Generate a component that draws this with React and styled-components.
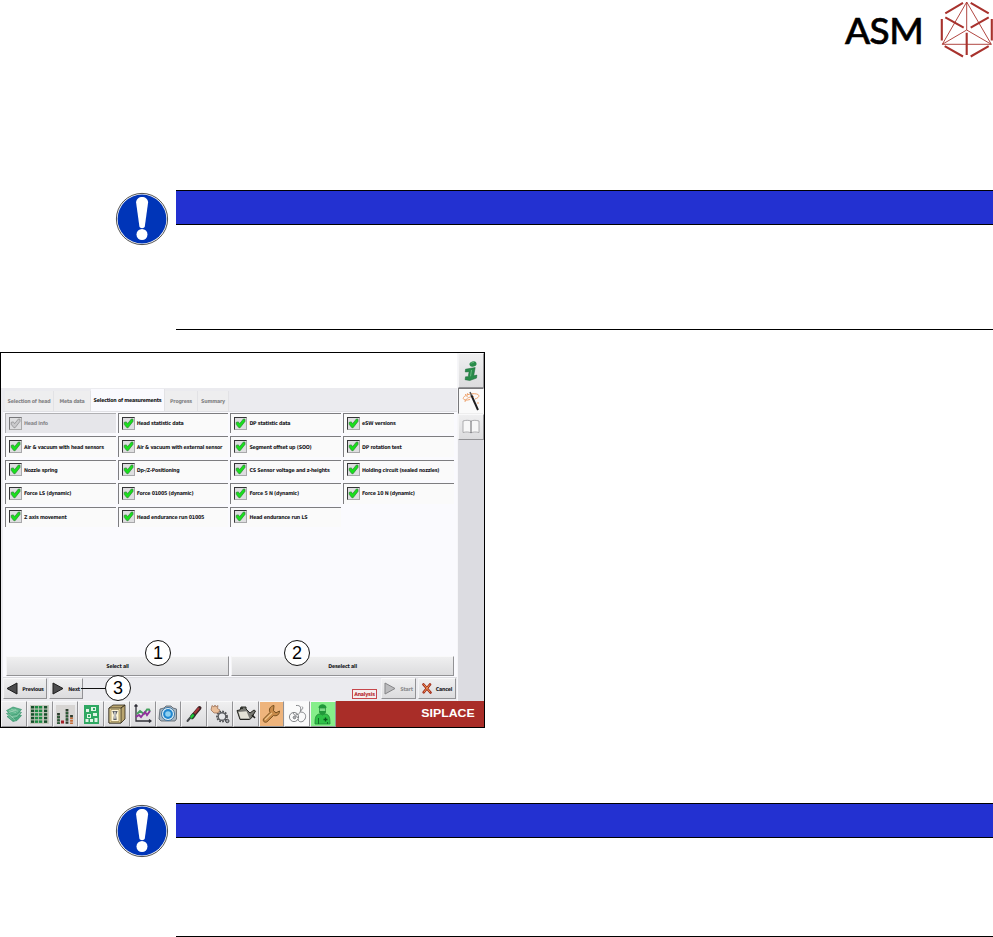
import React from 'react';
import styled, { createGlobalStyle } from 'styled-components';

const GlobalStyle = createGlobalStyle`
  * {
    box-sizing: border-box;
  }

  body {
    margin: 0;
    background: #fff;
    font-family: 'Liberation Sans', Arial, sans-serif;
    overflow: hidden;
  }

  svg {
    display: block;
    flex: none;
  }
`;

const measurements = [
  { label: 'Head info', disabled: true },
  { label: 'Head statistic data' },
  { label: 'DP statistic data' },
  { label: 'eSW versions' },
  { label: 'Air & vacuum with head sensors' },
  { label: 'Air & vacuum with external sensor' },
  { label: 'Segment offset up (SOO)' },
  { label: 'DP rotation test' },
  { label: 'Nozzle spring' },
  { label: 'Dp-/Z-Positioning' },
  { label: 'CS Sensor voltage and z-heights' },
  { label: 'Holding circuit (sealed nozzles)' },
  { label: 'Force LS (dynamic)' },
  { label: 'Force 01005 (dynamic)' },
  { label: 'Force 5 N (dynamic)' },
  { label: 'Force 10 N (dynamic)' },
  { label: 'Z axis movement' },
  { label: 'Head endurance run 01005' },
  { label: 'Head endurance run LS' },
];

const tabs = [
  { label: 'Selection of head', width: 49 },
  { label: 'Meta data', width: 37 },
  { label: 'Selection of measurements', width: 74, active: true },
  { label: 'Progress', width: 33 },
  { label: 'Summary', width: 31 },
];

const AsmLogo = () => (
  <svg width="58" height="60" viewBox="0 0 58 60" fill="none" stroke="#a8322d">
    <g strokeWidth="0.9">
      <path d="M31.700 2 7.300 44.300h49L31.700 2v28L7.300 44.300M31.700 30l24.600 14.300" />
    </g>
    <g strokeWidth="2.100">
      <path d="M10.300 13.300 28 2.900M35.700 2.900l18 10.400M10.300 17.300l18.400 10.400M35.700 27.700l18-10.400M6.800 19v21.500M56.800 19v21.500M31.700 32.700V55M9.700 46.200l18.300 10.300M35.700 56.500l18-10.300" />
    </g>
  </svg>
);

const MandatorySign = () => (
  <svg width="54" height="54" viewBox="0 0 54 54">
    <circle cx="27" cy="27" r="25.600" fill="#fff" stroke="#222" strokeWidth="0.8" />
    <circle cx="27" cy="27" r="24.400" fill="#0035b8" />
    <path d="M21.100 10.500c0-7.500 12-7.500 12 0L29.800 34.500c-.6 2.300-4.800 2.300-5.400 0z" fill="#fff" />
    <circle cx="27" cy="42.500" r="5.500" fill="#fff" />
  </svg>
);

const Check = ({ disabled }) => (
  <svg width="11" height="11" viewBox="0 0 11 11">
    <path
      d="M1.200 4.300 3.400 3.900 4.600 5.700 8.400 1l1.600.2v2.200L5 9.800 3.700 9.500 1.200 6.300z"
      fill={disabled ? '#c9c9cb' : '#19e01c'}
      stroke={disabled ? '#88888a' : '#2a8232'}
      strokeWidth="0.7"
    />
  </svg>
);

const NavArrow = ({ left, disabled }) => (
  <svg width="12" height="13" viewBox="0 0 12 13">
    <path
      d={left ? 'M11 1v11L1 6.500z' : 'M1 1v11l10-5.500z'}
      fill={disabled ? '#bcbcbe' : '#4b4b4d'}
      stroke={disabled ? '#858587' : '#1c1c1c'}
    />
  </svg>
);

const CancelIcon = () => (
  <svg width="10" height="11" viewBox="0 0 10 11" fill="none" strokeLinecap="round">
    <path d="M1.500 1.500 8.500 9.500M8 1.500 1.700 9.300" stroke="#a02818" strokeWidth="2.600" />
    <path d="M1.700 1.500 8 9M7.700 1.700 2 9" stroke="#f39a55" strokeWidth="1" />
  </svg>
);

const InfoIcon = () => (
  <svg width="17" height="22" viewBox="0 0 17 22">
    <ellipse cx="10" cy="4" rx="3.600" ry="2.600" fill="#298c4a" transform="rotate(-18 10 4)" />
    <path d="M2.500 9.200 12.200 7.500 10.700 15.800l3.200-.7-.4 3-6.700 2.400-4.700-.8.4-2.900 2.700-.1.900-5-3.800.3z" fill="#298c4a" stroke="#176334" strokeWidth="0.5" />
    <path d="M7.800 3.600c1-1.100 2.500-1.200 3.200-1M8.500 10l-1 6.300" stroke="#72bd86" strokeWidth="0.9" fill="none" />
  </svg>
);

const WandIcon = () => (
  <svg width="21" height="22" viewBox="0 0 21 22" fill="none">
    <path d="M9 9.500C4 11 1.500 9.500 2.500 7.500 4 4.500 13 2.500 17 4.500c2 1.300.5 3.500-3 4.500" stroke="#f0a36b" strokeWidth="1" />
    <path d="M4 12c0-3 4-5.500 9-5.500M4 4l1 1M5.500 6.500l1.500-.5" stroke="#e9945a" strokeWidth="0.8" />
    <path d="M10.300 5 17 20" stroke="#1d1d1f" strokeWidth="1.900" />
    <path d="m9 2 1.500 3.500" stroke="#555" strokeWidth="1.400" />
    <circle cx="17" cy="13" r=".8" fill="#ef9453" />
    <circle cx="6.500" cy="4" r=".7" fill="#ef9453" />
  </svg>
);

const BookIcon = () => (
  <svg width="18" height="16" viewBox="0 0 18 16">
    <path d="M1 2c3-.9 5.500-.9 8 0 2.500-.9 5-.9 8 0v11.500c-3-.8-5.500-.8-8 .3-2.500-1.100-5-1.100-8-.3z" fill="#f8f8f8" stroke="#9d9da0" strokeWidth="0.8" />
    <path d="M9 2v12" stroke="#66666a" />
  </svg>
);

const BoardStackIcon = () => (
  <svg width="18" height="18" viewBox="0 0 18 18" strokeWidth="0.6">
    <path d="m2 11.500 9-3 5.500 2-4.500 5L8 16.500z" fill="#4bab80" stroke="#2b8a62" />
    <path d="m1.500 8.500 9.500-3 5.500 2-4.500 5L7 13.500z" fill="#79c39f" stroke="#2b8a62" />
    <path d="M1.500 5.500 8 2l8.500 2.500-4.500 5L6 10.500z" fill="#5cb58c" stroke="#2b8a62" />
    <path d="m4 5.500 7 2M6 4.200l7 2M3.800 7.600l7.500-3.300M2 9.500l5 5M5 9.500l5 6" stroke="#b0dac1" />
  </svg>
);

const GridIcon = () => (
  <svg width="19" height="19" viewBox="0 0 19 19">
    <path fill="#c5c8bc" d="M0 0h19v19H0z" />
    {[1, 5, 9, 14].map((x) =>
      [1, 4.600, 8.200, 11.800, 15.400].map((y) => (
        <path key={`${x}-${y}`} d={`M${x} ${y}h3.200v2.500h-3.200z`} fill={x === 5 || x === 9 ? '#1b8b42' : '#174f2b'} />
      ))
    )}
  </svg>
);

const BarsIcon = () => (
  <svg width="19" height="19" viewBox="0 0 19 19">
    <path fill="#d7d5d3" d="M0 0h19v19H0z" />
    <path d="M2.500 8v11M11 4v15M15.500 10v3" stroke="#2b3a2c" strokeWidth="2.800" strokeDasharray="2.400 .7" />
    <path d="M2.500 11v8M11 7v9" stroke="#2b6f3b" strokeWidth="1.600" strokeDasharray="1.600 1.500" />
    <path d="M6.500 15.500v3" stroke="#a3222b" strokeWidth="3" />
    <path d="M15.500 12.500V19" stroke="#c56a35" strokeWidth="2.800" strokeDasharray="1.800 .7" />
  </svg>
);

const LayoutIcon = () => (
  <svg width="17" height="19" viewBox="0 0 17 19">
    <path fill="#2fa862" d="M1 0h15v19H1z" />
    <path d="M3 4h3v3H3zM8 2h5v4H8zM4 9h4v4H4zM10 8h4v3h-4zM7 14h3v3H7zM11.500 13h3v4h-3zM2.500 14h3v3h-3z" fill="#e1f4e6" />
    <path d="M10 3h2v2h-2zM5 10h2v2H5z" fill="#2fa862" />
  </svg>
);

const HeadIcon = () => (
  <svg width="18" height="20" viewBox="0 0 18 20">
    <path d="m1 4 4-3h12v14l-4 4H1z" fill="#b9a56f" stroke="#30281a" strokeWidth="0.8" />
    <path d="M1 4h12v15H1z" fill="#ead99c" stroke="#30281a" strokeWidth="0.8" />
    <path d="m13 4 4-3" stroke="#30281a" />
    <path d="M3 5.500h8v12H3z" fill="#fff6d7" stroke="#806c3d" strokeWidth="0.6" />
    <path d="M4.300 7h5.400L8 11l.7 5H5.300L6 11z" fill="#5d5f63" />
    <path d="M6.300 7.700h1.300v7H6.300z" fill="#e9eaec" />
  </svg>
);

const ChartIcon = () => (
  <svg width="19" height="20" viewBox="0 0 19 20" fill="none">
    <path d="M3 1v16h15M1.500 2.500 3 .8l1.500 1.700M16 15.500l2 1.500-2 1.500" stroke="#303038" strokeWidth="1.300" />
    <path d="M4 10 7 7l4 3 3-4.500h2l1 2" stroke="#44a05d" strokeWidth="1.800" />
    <path d="m3 13 3-2 2 2 4-5 2 3 3-4" stroke="#91339d" strokeWidth="1.900" />
  </svg>
);

const CameraIcon = () => (
  <svg width="20" height="18" viewBox="0 0 20 18">
    <path d="m2 4 4-1 2-2h5l2 2 3.500 1v10L17 16H3L1 14z" fill="#a8b5c0" stroke="#545d66" strokeWidth="0.8" />
    <circle cx="10" cy="9" r="6.500" fill="#e7f4fa" stroke="#3973a0" />
    <circle cx="10" cy="9" r="4.900" fill="#2187d0" />
    <circle cx="10" cy="9" r="2.800" fill="#8fd0f0" />
  </svg>
);

const PipetteIcon = () => (
  <svg width="18" height="19" viewBox="0 0 18 19" strokeLinecap="round">
    <path d="M9 9.500 14.500 3" stroke="#3a2224" strokeWidth="4" />
    <path d="m9 9 4.500-5.500" stroke="#a3363a" strokeWidth="2" />
    <path d="m7 12 1.500-1.700" stroke="#2b3a2d" strokeWidth="4.400" />
    <path d="m6 12.500 1.800-2" stroke="#1ccb37" strokeWidth="2.600" />
    <path d="m2.500 16 2.500-3" stroke="#45474a" strokeWidth="2" />
  </svg>
);

const GearsIcon = () => (
  <svg width="20" height="20" viewBox="0 0 20 20" fill="none">
    <circle cx="12" cy="12.500" r="5" stroke="#4d4f52" strokeWidth="1.800" strokeDasharray="1.700 1.200" />
    <circle cx="12" cy="12.500" r="3.800" stroke="#5b5d61" strokeWidth="1.400" fill="#e6e7e9" />
    <path d="M2 1.500 4 3l1-2 1 2 2-1.500-.5 3L10 6 8 9H4L1 6z" fill="#eabf9a" stroke="#93664b" strokeWidth="0.7" />
    <circle cx="17.300" cy="17" r="1.700" fill="#a7a9ad" stroke="#44464a" />
  </svg>
);

const OilIcon = () => (
  <svg width="20" height="16" viewBox="0 0 20 16">
    <path d="M1 4.500 4 4l1-3h5v2l4 4 4-3 1.500 1-4 7-2 1.500H4z" fill="#777872" stroke="#252621" strokeWidth="1" />
    <path d="m2.500 6 8-.8 3 7.300h-9z" fill="#e4e3d7" />
    <path d="M6 3V1.500M16 9l3 3" stroke="#1f201c" strokeWidth="1.600" />
  </svg>
);

const WrenchIcon = () => (
  <svg width="19" height="20" viewBox="0 0 19 20">
    <path d="M12 1.500c-4 .5-5.500 4-4 7L1.500 15c-1 2.500 1.500 4 3.500 2.800l6.500-6.300c3.500 1 6-1 6-4.500l-3.500 1.800-2.500-2z" fill="#c88a49" stroke="#765020" />
    <path d="m3 15.700 7-6.700" stroke="#efc388" strokeWidth="1.200" />
  </svg>
);

const StethoscopeIcon = () => (
  <svg width="19" height="20" viewBox="0 0 19 20" fill="none" stroke="#77797d" strokeWidth="0.9">
    <path d="M8 1.500C13 1 13 4 12.500 7c-.5 3-3 4-5 3" />
    <path d="M12.500 8c5 0 6 4 4.500 7-2 4-7 3.500-7 0" />
    <circle cx="6" cy="13" r="4.600" />
    <path d="M5 9c1 3 4 2 5 5M14 2.500c1.500 1 .5 3-1 4" />
    <circle cx="6.500" cy="13.500" r="1.300" fill="#aaacb0" />
  </svg>
);

const OperatorIcon = () => (
  <svg width="19" height="22" viewBox="0 0 19 22">
    <path d="M2 21c0-6 .5-9 4-10h7c3.500 1 4 4 4 10z" fill="#2fc147" stroke="#1f8a35" strokeWidth="0.8" />
    <path d="M6.500 5h6v4.500l-3 2.500-3-2.500z" fill="#7bd986" stroke="#16732b" strokeWidth="0.6" />
    <path d="M5.500 5c0-5 8-5 8 0zM6 8h7l-1 3-2.500 1L7 11z" fill="#20983a" />
    <path d="M10.500 16.500h4M12.500 14.500v4" stroke="#075a1d" strokeWidth="1.300" />
    <path d="M5.500 15v6M14.500 19v2" stroke="#126f29" />
  </svg>
);

const tools = [
  { Icon: BoardStackIcon },
  { Icon: GridIcon },
  { Icon: BarsIcon },
  { Icon: LayoutIcon },
  { Icon: HeadIcon },
  { Icon: ChartIcon },
  { Icon: CameraIcon },
  { Icon: PipetteIcon },
  { Icon: GearsIcon },
  { Icon: OilIcon },
  { Icon: WrenchIcon, tone: 'orange' },
  { Icon: StethoscopeIcon, tone: 'white' },
  { Icon: OperatorIcon, tone: 'green' },
];

const Notice = ({ bodyHeight, signOffset }) => (
  <NoticeRow>
    <SignCell $offset={signOffset}>
      <MandatorySign />
    </SignCell>
    <NoticeContent>
      <NoticeBar />
      <NoticeBody $height={bodyHeight} />
    </NoticeContent>
  </NoticeRow>
);

const App = () => (
  <Page>
    <GlobalStyle />
    <Header>
      <Brand>ASM</Brand>
      <AsmLogo />
    </Header>

    <Notice bodyHeight={105} signOffset={2} />

    <Screen>
      <Workspace>
        <Main>
          <MessageArea />
          <TabStrip>
            {tabs.map((tab) => (
              <Tab key={tab.label} $width={tab.width} $active={tab.active}>
                {tab.label}
              </Tab>
            ))}
          </TabStrip>
          <Panel>
            <OptionGrid>
              {measurements.map(({ label, disabled }) => (
                <Option key={label} $disabled={disabled}>
                  <Box $disabled={disabled}>
                    <Check disabled={disabled} />
                  </Box>
                  {label}
                </Option>
              ))}
            </OptionGrid>
            <SelectRow>
              <WideButton>
                Select all
                <Callout $left={138}>1</Callout>
              </WideButton>
              <WideButton>
                Deselect all
                <Callout $left={52}>2</Callout>
              </WideButton>
            </SelectRow>
          </Panel>
          <NavRow>
            <NavButton $width={44}>
              <NavArrow left />
              Previous
            </NavButton>
            <NavButton $width={34}>
              <NavArrow />
              Next
              <Leader />
              <Callout $left={55} $top={-4}>3</Callout>
            </NavButton>
            <Spacer />
            <Status>Analysis</Status>
            <NavButton $width={35} $disabled>
              <NavArrow disabled />
              Start
            </NavButton>
            <NavButton $width={38}>
              <CancelIcon />
              Cancel
            </NavButton>
          </NavRow>
        </Main>
        <Sidebar>
          <SideButton $height={35}>
            <InfoIcon />
          </SideButton>
          <SideButton $height={26} $active>
            <WandIcon />
          </SideButton>
          <SideButton $height={26}>
            <BookIcon />
          </SideButton>
        </Sidebar>
      </Workspace>
      <Toolbar>
        {tools.map(({ Icon, tone }, i) => (
          <Tool key={i} $tone={tone}>
            <Icon />
          </Tool>
        ))}
        <ProductBar>
          <ProductName>SIPLACE</ProductName>
        </ProductBar>
      </Toolbar>
    </Screen>

    <Notice bodyHeight={99} signOffset={1} />
  </Page>
);

const Page = styled.div`
  width: 993px;
  height: 937px;
  overflow: hidden;
`;

const Header = styled.header`
  display: flex;
  justify-content: flex-end;
  height: 190px;
`;

const Brand = styled.div`
  width: 90px;
  padding-top: 7px;
  font-family: Lato, sans-serif;
  font-size: 37px;
  line-height: 46px;
  font-weight: 500;
  letter-spacing: -0.6px;
  color: #000;
  -webkit-text-stroke: 0.6px #000;
`;

const NoticeRow = styled.section`
  display: flex;
  padding-left: 115px;
`;

const SignCell = styled.div`
  width: 61px;
  padding-top: ${({ $offset }) => $offset}px;
`;

const NoticeContent = styled.div`
  flex: 1;
`;

const NoticeBar = styled.div`
  height: 35px;
  border: solid #000;
  border-width: 1px 0;
  background: #2331d1;
`;

const NoticeBody = styled.div`
  height: ${({ $height }) => $height}px;
  border-bottom: 1px solid #000;
`;

const Screen = styled.main`
  display: flex;
  flex-direction: column;
  width: 485px;
  height: 376px;
  margin: 22px 0 75px;
  border: 1px solid #000;
  background: #ebebef;
  color: #17171a;
  font-family: 'DejaVu Sans Condensed', 'DejaVu Sans', sans-serif;
  font-size: 5.3px;
  font-weight: bold;
  letter-spacing: -0.23px;
  white-space: nowrap;
`;

const Workspace = styled.div`
  display: flex;
  height: 348px;
`;

const Main = styled.div`
  width: 457px;
  border-right: 1px solid #f6f6f9;
`;

const MessageArea = styled.div`
  height: 35px;
  background: #fff;
`;

const TabStrip = styled.div`
  display: flex;
  align-items: flex-end;
  height: 23px;
  padding-left: 4px;
`;

const Tab = styled.div`
  display: flex;
  align-items: center;
  justify-content: center;
  width: ${({ $width }) => $width}px;
  height: ${({ $active }) => ($active ? 22 : 20)}px;
  border-right: 1px solid #e2e2e5;
  background: ${({ $active }) => ($active ? '#fafafe' : '#eeeeef')};
  color: ${({ $active }) => ($active ? '#101012' : '#818183')};
  padding-bottom: ${({ $active }) => ($active ? 1 : 0)}px;
`;

const Panel = styled.div`
  height: 267px;
  margin-left: 2px;
  padding: 1px 2px 0;
  border-top: 1px solid #e0e0e4;
  border-bottom: 1px solid #dcdce0;
  background: #fafafe;
`;

const OptionGrid = styled.div`
  display: grid;
  grid-template-columns: repeat(4, 110.5px);
  grid-auto-rows: 20.400px;
  gap: 3px 2.200px;
  height: 243px;
  align-content: start;
`;

const Option = styled.label`
  display: flex;
  align-items: center;
  gap: 2px;
  padding: 0 0 1px 3px;
  border: solid ${({ $disabled }) => ($disabled ? '#b0b0b3' : '#7d7d80')};
  border-width: 1px 0 0 1px;
  background: ${({ $disabled }) => ($disabled ? '#e6e6ea' : '#fafafa')};
  color: ${({ $disabled }) => ($disabled ? '#88888b' : 'inherit')};
`;

const Box = styled.span`
  display: flex;
  align-items: center;
  justify-content: center;
  width: 13px;
  height: 13px;
  border: 1px solid;
  border-color: ${({ $disabled }) =>
    $disabled ? '#77777a #aaa #aaa #77777a' : '#353537 #a8a8aa #a8a8aa #353537'};
  background: #dedee0;
`;

const SelectRow = styled.div`
  display: grid;
  grid-template-columns: 223px 223px;
  gap: 2px;
  padding-left: 1px;
`;

const raised = `
  background: linear-gradient(#efeff0, #dcdcde);
  border: 1px solid;
  border-color: #f9f9fa #929295 #929295 #f4f4f5;
`;

const WideButton = styled.div`
  ${raised}
  position: relative;
  display: flex;
  align-items: center;
  justify-content: center;
  height: 20px;
`;

const Callout = styled.span`
  position: absolute;
  left: ${({ $left }) => $left}px;
  top: ${({ $top = -17 }) => $top}px;
  width: 26px;
  height: 26px;
  border: 1px solid #111;
  border-radius: 50%;
  background: #fff;
  color: #000;
  font: 18px/24px 'Liberation Sans', Arial, sans-serif;
  letter-spacing: 0;
  text-align: center;
`;

const Leader = styled.span`
  position: absolute;
  left: 31px;
  top: 9px;
  width: 26px;
  height: 1px;
  background: #111;
`;

const NavRow = styled.div`
  display: flex;
  align-items: flex-start;
  gap: 2px;
  padding: 0 1px 0 2px;
`;

const NavButton = styled.div`
  ${raised}
  position: relative;
  display: flex;
  align-items: center;
  justify-content: center;
  gap: 4px;
  width: ${({ $width }) => $width}px;
  height: 21px;
  color: ${({ $disabled }) => ($disabled ? '#8c8c8e' : 'inherit')};
`;

const Spacer = styled.div`
  flex: 1;
`;

const Status = styled.div`
  margin: 11px 2px 0 0;
  width: 25px;
  border: 1px solid #c6474b;
  background: #f5eeee;
  color: #b5262b;
  line-height: 8px;
  text-align: center;
`;

const Sidebar = styled.div`
  width: 26px;
  background: #dcdce1;
`;

const SideButton = styled.div`
  ${raised}
  display: flex;
  align-items: center;
  justify-content: center;
  height: ${({ $height }) => $height}px;
  ${({ $active }) => $active && 'background: #fafafa; border-color: #77777a #eee #eee #77777a;'}
`;

const Toolbar = styled.div`
  display: flex;
  height: 26px;
`;

const toneColors = {
  orange: '#eeb47c',
  white: '#fafafa',
  green: '#86ee8a',
};

const Tool = styled.div`
  ${raised}
  display: flex;
  align-items: center;
  justify-content: center;
  width: 25.750px;
  ${({ $tone }) => $tone && `background: ${toneColors[$tone]};`}
`;

const ProductBar = styled.div`
  display: flex;
  flex: 1;
  justify-content: flex-end;
  padding-right: 9px;
  background: #a92d28;
`;

const ProductName = styled.span`
  color: #fff;
  font: bold 11px/25px 'Liberation Sans', Arial, sans-serif;
  letter-spacing: 0;
  transform: scaleX(1.12);
  transform-origin: right;
`;

export default App;
